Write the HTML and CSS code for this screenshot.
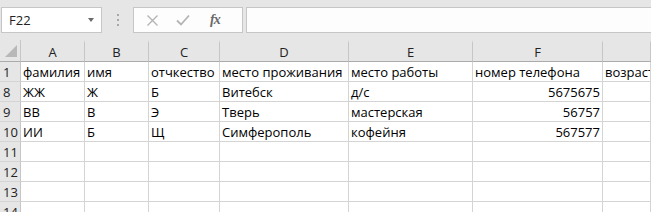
FILE: index.html
```html
<!DOCTYPE html>
<html lang="ru">
<head>
    <meta charset="UTF-8">
    <title>Лист1</title>
    <link rel="stylesheet" href="styles.css">
</head>
<body>
    <div class="toolbar">
        <div class="name-box">
            <span class="cell-ref">F22</span>
            <span class="drop-arrow"></span>
        </div>
        <div class="grip">
            <span></span><span></span><span></span>
        </div>
        <div class="fx-buttons">
            <svg class="fx-icon" width="13" height="13" viewBox="0 0 13 13">
                <path d="M1.5 1.5 L11.5 11.5 M11.5 1.5 L1.5 11.5" stroke="#b4b4b4" stroke-width="1.4" fill="none"/>
            </svg>
            <svg class="fx-icon" width="14" height="12" viewBox="0 0 14 12">
                <path d="M1 6.5 L5 10.5 L13 1.5" stroke="#b4b4b4" stroke-width="1.8" fill="none"/>
            </svg>
            <span class="fx-label">fx</span>
        </div>
        <div class="formula-input"></div>
    </div>

    <div class="sheet">
        <div class="corner"><span class="corner-tri"></span></div>
        <div class="col-head">A</div>
        <div class="col-head">B</div>
        <div class="col-head">C</div>
        <div class="col-head">D</div>
        <div class="col-head">E</div>
        <div class="col-head">F</div>
        <div class="col-head"></div>

        <div class="row-head">1</div>
        <div class="cell">фамилия</div>
        <div class="cell">имя</div>
        <div class="cell">отчкество</div>
        <div class="cell">место проживания</div>
        <div class="cell">место работы</div>
        <div class="cell">номер телефона</div>
        <div class="cell">возраст</div>

        <div class="row-head">8</div>
        <div class="cell">ЖЖ</div>
        <div class="cell">Ж</div>
        <div class="cell">Б</div>
        <div class="cell">Витебск</div>
        <div class="cell">д/с</div>
        <div class="cell num">5675675</div>
        <div class="cell"></div>

        <div class="row-head">9</div>
        <div class="cell">ВВ</div>
        <div class="cell">В</div>
        <div class="cell">Э</div>
        <div class="cell">Тверь</div>
        <div class="cell">мастерская</div>
        <div class="cell num">56757</div>
        <div class="cell"></div>

        <div class="row-head">10</div>
        <div class="cell">ИИ</div>
        <div class="cell">Б</div>
        <div class="cell">Щ</div>
        <div class="cell">Симферополь</div>
        <div class="cell">кофейня</div>
        <div class="cell num">567577</div>
        <div class="cell"></div>

        <div class="row-head">11</div>
        <div class="cell"></div><div class="cell"></div><div class="cell"></div><div class="cell"></div><div class="cell"></div><div class="cell"></div><div class="cell"></div>

        <div class="row-head">12</div>
        <div class="cell"></div><div class="cell"></div><div class="cell"></div><div class="cell"></div><div class="cell"></div><div class="cell"></div><div class="cell"></div>

        <div class="row-head">13</div>
        <div class="cell"></div><div class="cell"></div><div class="cell"></div><div class="cell"></div><div class="cell"></div><div class="cell"></div><div class="cell"></div>

        <div class="row-head">14</div>
        <div class="cell"></div><div class="cell"></div><div class="cell"></div><div class="cell"></div><div class="cell"></div><div class="cell"></div><div class="cell"></div>
    </div>
</body>
</html>
```

FILE: styles.css
```css
* {
    box-sizing: border-box;
    margin: 0;
    padding: 0;
}
body {
    font-family: "Open Sans", "Liberation Sans", sans-serif;
    font-size: 13px;
    background-color: #e6e6e6;
    width: 651px;
    height: 212px;
    overflow: hidden;
}
.toolbar {
    display: flex;
    align-items: flex-start;
    height: 40px;
    padding-top: 7px;
    padding-left: 1px;
    background-color: #e6e6e6;
}
.name-box {
    width: 101px;
    height: 26px;
    background-color: #fff;
    border: 1px solid #c6c6c6;
    display: flex;
    align-items: center;
    padding-left: 7px;
    padding-right: 7px;
}
.cell-ref {
    flex: 1;
    color: #222;
}
.drop-arrow {
    width: 0;
    height: 0;
    border-left: 3.5px solid transparent;
    border-right: 3.5px solid transparent;
    border-top: 4px solid #6b6b6b;
}
.grip {
    width: 31px;
    height: 26px;
    display: flex;
    flex-direction: column;
    align-items: center;
    justify-content: center;
    gap: 3px;
}
.grip span {
    width: 2px;
    height: 2px;
    background-color: #a8a8a8;
}
.fx-buttons {
    width: 110px;
    height: 26px;
    background-color: #fdfdfd;
    border: 1px solid #c6c6c6;
    display: flex;
    align-items: center;
    padding-left: 12px;
    gap: 17px;
}
.fx-label {
    font-family: "Liberation Serif", serif;
    font-style: italic;
    font-weight: bold;
    font-size: 14px;
    color: #6a6a6a;
    letter-spacing: -1px;
    margin-left: 3px;
}
.formula-input {
    flex: 1;
    height: 26px;
    margin-left: 3px;
    background-color: #fdfdfd;
    border: 1px solid #c6c6c6;
    border-right: none;
}
.sheet {
    display: grid;
    grid-template-columns: 21px 64px 64px 71px 129px 124px 130px 1fr;
    grid-template-rows: 22px repeat(7, 20px);
}
.corner {
    background-color: #e6e6e6;
    border-right: 1px solid #c6c6c6;
    border-bottom: 1px solid #ababab;
    position: relative;
}
.corner-tri {
    position: absolute;
    left: 5px;
    top: 5px;
    width: 0;
    height: 0;
    border-left: 12px solid transparent;
    border-bottom: 12px solid #b8b8b8;
}
.col-head {
    background-color: #e6e6e6;
    border-bottom: 1px solid #ababab;
    border-right: 1px solid #c6c6c6;
    border-top: 3px solid #e6e6e6;
    text-align: center;
    line-height: 18px;
    color: #222;
}
.row-head {
    background-color: #e6e6e6;
    border-right: 1px solid #c6c6c6;
    border-bottom: 1px solid #d4d4d4;
    padding-left: 3px;
    line-height: 20px;
    color: #222;
}
.cell {
    background-color: #fff;
    border-right: 1px solid #d4d4d4;
    border-bottom: 1px solid #d4d4d4;
    padding: 0 2px;
    line-height: 20px;
    white-space: nowrap;
    overflow: hidden;
    color: #000;
}
.num {
    text-align: right;
}
```
